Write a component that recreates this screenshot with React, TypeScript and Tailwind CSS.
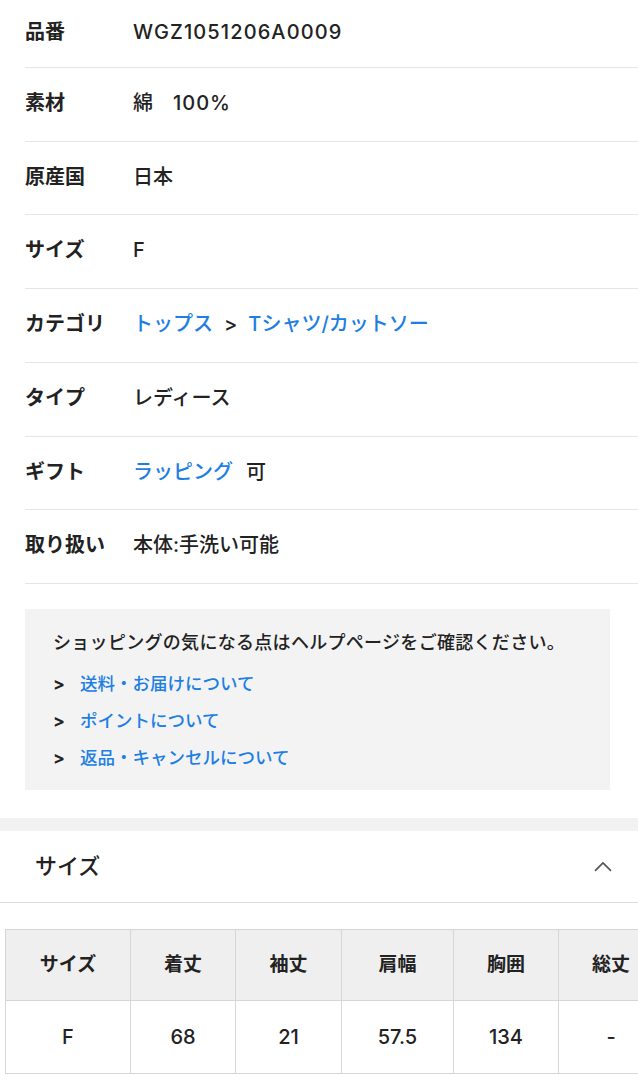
import React from "react";

const Blue = ({ children }: { children: React.ReactNode }) => (
  <span className="text-[#1d7ee4]">{children}</span>
);

const rows: { label: string; value: React.ReactNode; h: string }[] = [
  { label: "品番", value: <span className="tracking-[1.1px]">WGZ1051206A0009</span>, h: "h-[68px]" },
  {
    label: "素材",
    value: (
      <span>
        綿　<span className="tracking-[1px]">100%</span>
      </span>
    ),
    h: "h-[74px]",
  },
  { label: "原産国", value: "日本", h: "h-[73px]" },
  { label: "サイズ", value: "F", h: "h-[74px]" },
  {
    label: "カテゴリ",
    value: (
      <span>
        <Blue>トップス</Blue>
        <span className="mx-[11px]">&gt;</span>
        <Blue>Tシャツ/カットソー</Blue>
      </span>
    ),
    h: "h-[74px]",
  },
  { label: "タイプ", value: "レディース", h: "h-[74px]" },
  {
    label: "ギフト",
    value: (
      <span>
        <Blue>ラッピング</Blue>
        <span className="ml-[13px]">可</span>
      </span>
    ),
    h: "h-[73px]",
  },
  { label: "取り扱い", value: "本体:手洗い可能", h: "h-[74px]" },
];

const sizeHead = ["サイズ", "着丈", "袖丈", "肩幅", "胸囲", "総丈"];
const sizeVals = ["F", "68", "21", "57.5", "134", "-"];
const colW = ["w-[124px]", "w-[105px]", "w-[106px]", "w-[112px]", "w-[105px]", "w-[105px]"];

export default function App() {
  return (
    <div className="w-[638px] min-h-[1080px] bg-white overflow-hidden font-['Inter','Noto_Sans_CJK_JP',sans-serif] text-[#222]">
      <div className="pl-[25px]">
        {rows.map((r) => (
          <div
            key={r.label}
            className={`flex items-center border-b border-[#e6e6e6] pb-[3px] ${r.h}`}
          >
            <div className="w-[108px] shrink-0 text-[20px] font-bold leading-[26px]">{r.label}</div>
            <div className="text-[20px] font-medium leading-[26px]">{r.value}</div>
          </div>
        ))}
      </div>

      <div className="ml-[25px] mr-[28px] mt-[25px] bg-[#f3f3f3] pl-[28px] pt-[22px] pb-[20px]">
        <p className="text-[18px] font-medium leading-[24px] tracking-[0.3px]">
          ショッピングの気になる点はヘルプページをご確認ください。
        </p>
        <ul className="mt-[17px] flex flex-col gap-[13px]">
          {["送料・お届けについて", "ポイントについて", "返品・キャンセルについて"].map((t) => (
            <li key={t} className="flex items-center text-[17.5px] font-medium leading-[24px]">
              <span className="w-[27px] font-bold">&gt;</span>
              <Blue>{t}</Blue>
            </li>
          ))}
        </ul>
      </div>

      <div className="mt-[28px] h-[13px] bg-[#f2f2f2]" />

      <div className="flex h-[72px] items-center justify-between border-b border-[#dcdcdc] pl-[35px] pr-[25px]">
        <span className="text-[22px] font-medium">サイズ</span>
        <svg width="20" height="20" viewBox="0 0 24 24" fill="none" stroke="#555" strokeWidth="2" strokeLinecap="round" strokeLinejoin="round">
          <path d="M3 16l9-9 9 9" />
        </svg>
      </div>

      <div className="mt-[26px] ml-[5px] w-[700px]">
        <div className="flex border border-[#d6d6d6] bg-[#efefef]">
          {sizeHead.map((h, i) => (
            <div
              key={h}
              className={`${colW[i]} h-[70px] shrink-0 flex items-center justify-center text-[19px] font-bold ${i > 0 ? "border-l border-[#d6d6d6]" : ""}`}
            >
              {h}
            </div>
          ))}
        </div>
        <div className="flex border border-t-0 border-[#d6d6d6] bg-white">
          {sizeVals.map((v, i) => (
            <div
              key={i}
              className={`${colW[i]} h-[72px] shrink-0 flex items-center justify-center text-[20px] font-medium ${i > 0 ? "border-l border-[#d6d6d6]" : ""}`}
            >
              {v}
            </div>
          ))}
        </div>
      </div>
    </div>
  );
}
